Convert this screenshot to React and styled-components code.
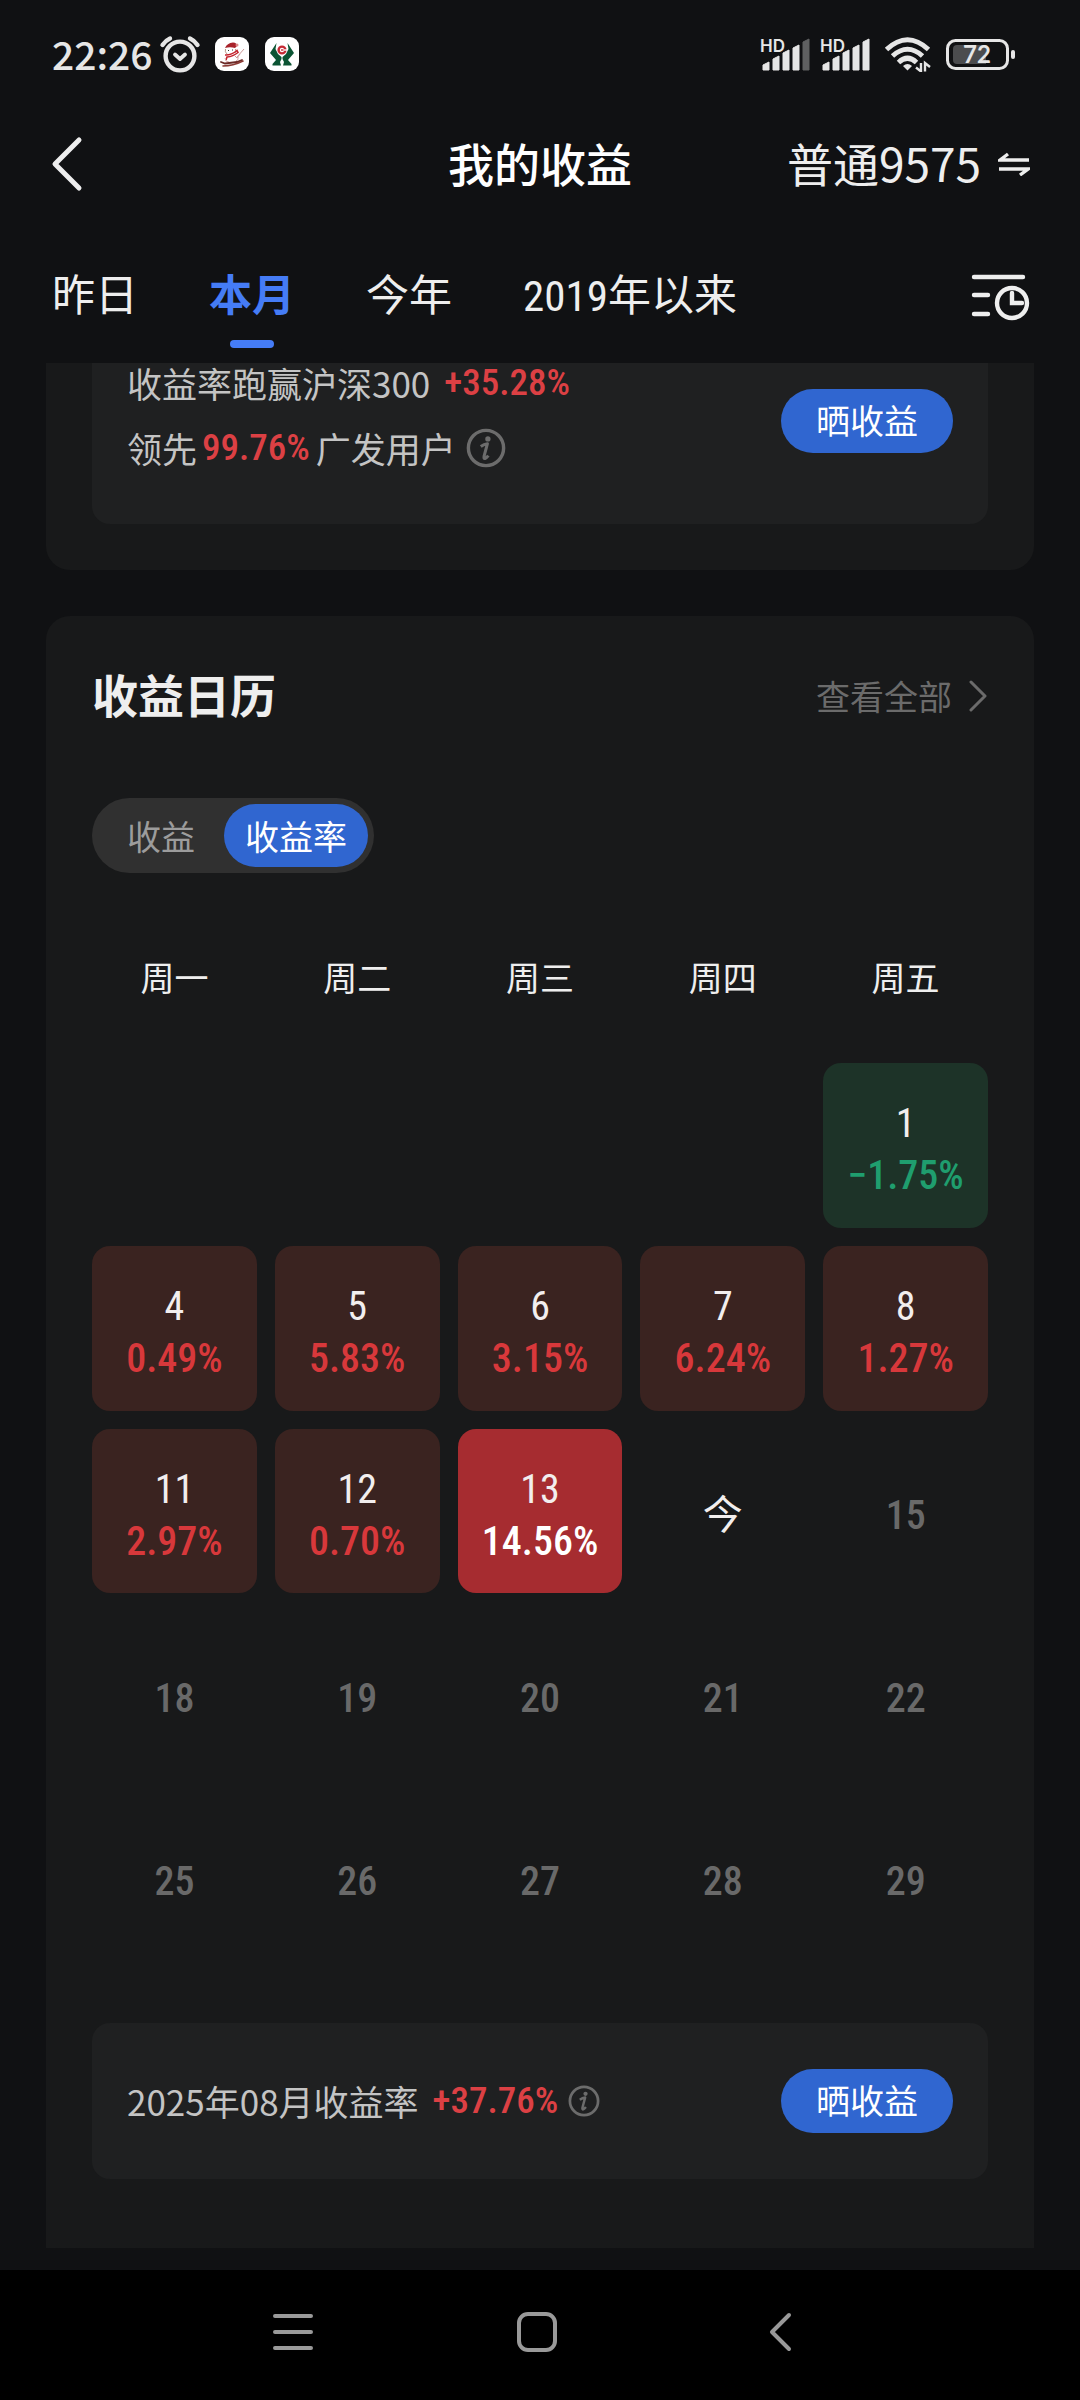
import React, { useState } from 'react';
import styled, { createGlobalStyle } from 'styled-components';

const tabs = ['昨日', '本月', '今年', '2019年以来'];
const modes = ['收益', '收益率'];
const weekdays = ['周一', '周二', '周三', '周四', '周五'];

const weeks = [
  [null, null, null, null, { day: '1', rate: '−1.75%', tone: 'down' }],
  [
    { day: '4', rate: '0.49%', tone: 'up' },
    { day: '5', rate: '5.83%', tone: 'up' },
    { day: '6', rate: '3.15%', tone: 'up' },
    { day: '7', rate: '6.24%', tone: 'up' },
    { day: '8', rate: '1.27%', tone: 'up' },
  ],
  [
    { day: '11', rate: '2.97%', tone: 'up' },
    { day: '12', rate: '0.70%', tone: 'up' },
    { day: '13', rate: '14.56%', tone: 'selected' },
    { day: '今', tone: 'today' },
    { day: '15' },
  ],
  [{ day: '18' }, { day: '19' }, { day: '20' }, { day: '21' }, { day: '22' }],
  [{ day: '25' }, { day: '26' }, { day: '27' }, { day: '28' }, { day: '29' }],
];

const App = () => {
  const [tab, setTab] = useState('本月');
  const [mode, setMode] = useState('收益率');

  return (
    <Page>
      <GlobalStyle />
      <StatusBar>
        <StatusGroup $gap={6}>
          <Time>22:26</Time>
          <AlarmIcon />
          <AppBadges>
            <SkierIcon />
            <HandsIcon />
          </AppBadges>
        </StatusGroup>
        <StatusGroup $gap={12}>
          <Signals>
            <SignalIcon level={4} />
            <SignalIcon level={5} />
          </Signals>
          <WifiIcon />
          <BatteryIcon />
        </StatusGroup>
      </StatusBar>

      <Header>
        <IconButton aria-label="返回">
          <svg width="34" height="58" viewBox="0 0 34 58" fill="none">
            <path
              d="M29 5L5 29l24 24"
              stroke="#eee"
              strokeWidth="5"
              strokeLinecap="round"
              strokeLinejoin="round"
            />
          </svg>
        </IconButton>
        <Title>我的收益</Title>
        <Account>
          <AccountName>普通9575</AccountName>
          <svg width="32" height="24" viewBox="0 0 32 24" fill="none">
            <path
              d="M31 8H2L10 2M1 17h29l-8 6"
              stroke="#eee"
              strokeWidth="3.4"
            />
          </svg>
        </Account>
      </Header>

      <TabBar>
        {tabs.map((name) => (
          <Tab key={name} $active={tab === name} onClick={() => setTab(name)}>
            {name}
          </Tab>
        ))}
        <FilterButton aria-label="筛选时间">
          <svg width="60" height="50" viewBox="0 0 60 50" fill="none">
            <g stroke="#eee" strokeWidth="4.4" strokeLinecap="round">
              <path d="M4 6h49M4 24h14M4 43h14M42 22v10h10" />
              <circle cx="42" cy="32" r="15" />
            </g>
          </svg>
        </FilterButton>
      </TabBar>

      <Content>
        <Card $cut="top">
          <Summary $cut>
            <Compare>
              <Line>
                收益率跑赢沪深300<Gain $gap={14}>+35.28%</Gain>
              </Line>
              <Line>
                领先<Gain $gap={5}>99.76%</Gain>
                <Tail>广发用户</Tail>
                <InfoButton aria-label="说明">
                  <InfoIcon size={40} />
                </InfoButton>
              </Line>
            </Compare>
            <ShareButton>晒收益</ShareButton>
          </Summary>
        </Card>

        <Card $cut="bottom">
          <CardHead>
            <CardTitle>收益日历</CardTitle>
            <MoreLink href="#all">
              查看全部
              <svg width="20" height="32" viewBox="0 0 20 32" fill="none">
                <path
                  d="M3 2l14 14L3 30"
                  stroke="#6b6b6b"
                  strokeWidth="3"
                  strokeLinecap="round"
                  strokeLinejoin="round"
                />
              </svg>
            </MoreLink>
          </CardHead>

          <Toggle>
            {modes.map((name) => (
              <Mode
                key={name}
                $active={mode === name}
                onClick={() => setMode(name)}
              >
                {name}
              </Mode>
            ))}
          </Toggle>

          <Calendar>
            <WeekHead>
              <Week>
                {weekdays.map((name) => (
                  <Weekday key={name}>{name}</Weekday>
                ))}
              </Week>
            </WeekHead>
            <Weeks>
              {weeks.map((week, i) => (
                <Week key={i}>
                  {week.map((item, j) => (
                    <Day key={j} $tone={item?.tone}>
                      {item && <DayNumber $tone={item.tone}>{item.day}</DayNumber>}
                      {item?.rate && <Rate $tone={item.tone}>{item.rate}</Rate>}
                    </Day>
                  ))}
                </Week>
              ))}
            </Weeks>
          </Calendar>

          <Summary>
            <Line>
              2025年08月收益率<Gain $gap={14}>+37.76%</Gain>
              <InfoButton aria-label="说明">
                <InfoIcon size={32} />
              </InfoButton>
            </Line>
            <ShareButton>晒收益</ShareButton>
          </Summary>
        </Card>
      </Content>

      <NavBar>
        <NavButton aria-label="最近任务">
          <svg width="44" height="44" viewBox="0 0 44 44" fill="none">
            <path
              d="M4 6h36M4 22h36M4 38h36"
              stroke="#999"
              strokeWidth="4"
              strokeLinecap="round"
            />
          </svg>
        </NavButton>
        <NavButton aria-label="主屏幕">
          <svg width="44" height="44" viewBox="0 0 44 44" fill="none">
            <rect
              x="4"
              y="4"
              width="36"
              height="36"
              rx="9"
              stroke="#999"
              strokeWidth="4"
            />
          </svg>
        </NavButton>
        <NavButton aria-label="返回上一页">
          <svg width="44" height="44" viewBox="0 0 44 44" fill="none">
            <path
              d="M30 5L13 22l17 17"
              stroke="#999"
              strokeWidth="4"
              strokeLinecap="round"
              strokeLinejoin="round"
            />
          </svg>
        </NavButton>
      </NavBar>
    </Page>
  );
};

export default App;

// icons

const AlarmIcon = () => (
  <svg width="42" height="38" viewBox="0 0 42 38" fill="none">
    <g stroke="#e6e6e6" strokeLinecap="round">
      <circle cx="21" cy="21" r="14.4" strokeWidth="4.4" />
      <path d="M3.5 10Q6.5 5.5 11 3.500M38.5 10Q35.5 5.5 31 3.500" strokeWidth="4.4" />
      <path d="M16 19.5l5 4.5 5-4.5" strokeWidth="3.8" strokeLinejoin="round" />
    </g>
  </svg>
);

const SkierIcon = () => (
  <svg width="34" height="34" viewBox="0 0 34 34" fill="none">
    <rect width="34" height="34" rx="9" fill="#fff" />
    <path d="M10 11q2-5 8-5.500 4 0 4 3.500l-2 2q-5-1.500-10 0z" fill="#a8232b" />
    <circle cx="22" cy="8" r="1.5" fill="#d88" />
    <path d="M10.5 12q-1 3 1.500 5M20.5 12q1 2-.5 4" stroke="#b98" strokeWidth="1" />
    <path d="M13 13.500h1M17 13h1" stroke="#333" strokeWidth="1" />
    <path d="M10 18q6 .5 12-4.500l1 2q-5 4-11 4.500l-1 3" stroke="#c4222c" strokeWidth="1.6" />
    <path d="M19 18l3 3 3-4M29 12L22 20" stroke="#c99" strokeWidth="1" />
    <path d="M10 21q0 4 4 4M23 20q1 3-2 4" stroke="#d9a9a9" strokeWidth="1" />
    <path d="M6 25l4 1.500 12-1.500 5-2" stroke="#6b2a26" strokeWidth="1.8" strokeLinecap="round" />
    <path d="M8 29q10 0 20-5" stroke="#8a3a34" strokeWidth="1.6" strokeLinecap="round" />
  </svg>
);

// two green hands holding a red coin
const HandsIcon = () => (
  <svg width="34" height="34" viewBox="0 0 34 34" fill="none">
    <rect width="34" height="34" rx="9" fill="#fff" />
    <path
      d="M11.5 6L10.500 12 13 17l3.500 3v2l-1.500 3 1 3.500H7.500v-1.500l3.500-4-6-7z"
      fill="#0b5433"
    />
    <path
      d="M22.500 6l1 6L21 17l-3.500 3v2l1.500 3-1 3.500h8.500v-1.500L23 23l6-7z"
      fill="#0b5433"
    />
    <circle cx="17" cy="13" r="3.4" stroke="#c62a34" strokeWidth="2.4" />
    <path d="M18 13h4" stroke="#fff" strokeWidth="1.4" />
    <path d="M16 13h2.5" stroke="#c62a34" strokeWidth="1.4" />
  </svg>
);

const SignalIcon = ({ level }) => (
  <svg width="52" height="34" viewBox="0 0 52 34">
    <HdLabel x="0" y="15">
      HD
    </HdLabel>
    {[8, 14, 20, 25, 31].map((h, i) => (
      <path
        key={h}
        d={`M${3 + i * 10} 33v${3 - h}l6-3v${h}z`}
        fill={i < level ? '#e6e6e6' : '#5f6061'}
        stroke={i < level ? '#e6e6e6' : '#5f6061'}
        strokeLinejoin="round"
      />
    ))}
  </svg>
);

const WifiIcon = () => (
  <svg width="50" height="36" viewBox="0 0 50 36" fill="none">
    <g stroke="#e6e6e6" strokeWidth="5">
      <path d="M2.5 13.5Q23.500-6 44.500 13.500" />
      <path d="M8.5 20Q23.5 6.5 38.5 20" />
      <path d="M14.500 26.5Q23.500 18 32.500 26.5" />
    </g>
    <path d="M23.5 34.500l-4.500-4.500q4.500-4 9 0z" fill="#e6e6e6" />
    <path d="M37 27v8.500l-5-4M41 35.5V27l5 4" stroke="#e6e6e6" strokeWidth="2.4" />
  </svg>
);

const BatteryIcon = () => (
  <svg width="70" height="32" viewBox="0 0 70 32" fill="none">
    <rect x="1.5" y="2.5" width="60" height="28" rx="8" stroke="#e6e6e6" strokeWidth="3" />
    <path d="M11 7h29v19H11q-4 0-4-4V11q0-4 4-4z" fill="#4b4c4e" />
    <rect x="65" y="12" width="4" height="9" rx="2" fill="#e6e6e6" />
    <BatteryLabel x="31" y="25">
      72
    </BatteryLabel>
  </svg>
);

const InfoIcon = ({ size }) => (
  <svg width={size} height={size} viewBox="0 0 42 42" fill="none">
    <circle cx="21" cy="21" r="18.5" stroke="#6c6c6c" strokeWidth="3.6" />
    <circle cx="23" cy="11.5" r="2.8" fill="#6c6c6c" />
    <path
      d="M15.500 19.500q3.500-2.500 7-3l-3.500 13q-.5 3 1 2.500 1.500-.5 3.500-3"
      stroke="#6c6c6c"
      strokeWidth="3.2"
      strokeLinejoin="round"
    />
  </svg>
);

// styled component

const cjk = `'Noto Sans CJK SC', sans-serif`;
const narrow = `'Roboto Condensed', Roboto, 'Noto Sans CJK SC', sans-serif`;

const cellColors = {
  up: '#3a2320',
  down: '#1d3328',
  selected: '#a62c30',
};
const rateColors = {
  up: '#d8383b',
  down: '#1f9e6e',
  selected: '#fff',
};

const GlobalStyle = createGlobalStyle`
  * {
    box-sizing: border-box;
  }
  body {
    margin: 0;
    background-color: #101113;
    color: #eee;
    font-family: ${cjk};
  }
  button {
    padding: 0;
    border: none;
    background-color: transparent;
    color: inherit;
    font-family: inherit;
    cursor: pointer;
  }
  svg {
    display: block;
    flex-shrink: 0;
  }
`;

const Page = styled.div`
  display: flex;
  flex-direction: column;
  min-height: 100vh;
`;

const StatusBar = styled.div`
  display: flex;
  align-items: center;
  justify-content: space-between;
  height: 108px;
  padding: 0 64px 0 52px;
`;
const StatusGroup = styled.div`
  display: flex;
  align-items: center;
  gap: ${(props) => props.$gap}px;
`;
const Time = styled.span`
  padding-bottom: 2px;
  color: #e6e6e6;
  font-size: 39px;
  font-weight: 500;
  line-height: 52px;
`;
const AppBadges = styled.div`
  display: flex;
  gap: 16px;
  padding-left: 8px;
`;
const Signals = styled.div`
  display: flex;
  gap: 8px;
`;
const HdLabel = styled.text`
  fill: #e6e6e6;
  font-family: Inter, sans-serif;
  font-size: 17px;
  font-weight: 600;
`;
const BatteryLabel = styled.text`
  fill: #e6e6e6;
  font-family: Lato, sans-serif;
  font-size: 24px;
  font-weight: 700;
  text-anchor: middle;
`;

const Header = styled.header`
  display: grid;
  grid-template-columns: 1fr auto 1fr;
  align-items: center;
  height: 112px;
  padding: 0 50px;
`;
const IconButton = styled.button`
  justify-self: start;
`;
const Title = styled.h1`
  margin: 0;
  padding-bottom: 4px;
  color: #fff;
  font-size: 46px;
  font-weight: 500;
  line-height: 60px;
`;
const Account = styled.button`
  display: flex;
  align-items: center;
  justify-self: end;
  gap: 17px;
  font-size: 46px;
  line-height: 60px;
`;
const AccountName = styled.span`
  padding-bottom: 4px;
`;

const TabBar = styled.nav`
  display: flex;
  align-items: flex-start;
  gap: 71px;
  padding: 46px 50px 15px 52px;
`;
const Tab = styled.button`
  display: flex;
  flex-direction: column;
  align-items: center;
  gap: 14px;
  color: ${(props) => (props.$active ? '#457cf6' : '#eee')};
  font-family: ${narrow};
  font-size: 43px;
  font-weight: ${(props) => (props.$active ? 700 : 400)};
  line-height: 60px;
  &::after {
    content: '';
    width: 44px;
    height: 8px;
    border-radius: 4px;
    background-color: ${(props) => (props.$active ? '#457cf6' : 'transparent')};
  }
`;
const FilterButton = styled.button`
  display: flex;
  align-items: center;
  height: 60px;
  margin-left: auto;
`;

const Content = styled.main`
  display: flex;
  flex: 1;
  flex-direction: column;
  gap: 46px;
  padding: 0 46px 22px;
`;
const Card = styled.section`
  padding: ${(props) => (props.$cut === 'top' ? '0 46px 46px' : '46px 46px 69px')};
  border-radius: ${(props) =>
    props.$cut === 'top' ? '0 0 24px 24px' : '24px 24px 0 0'};
  background-color: #18191a;
`;
const Summary = styled.div`
  display: flex;
  align-items: center;
  justify-content: space-between;
  padding: ${(props) => (props.$cut ? '0 35px 45px' : '46px 35px')};
  border-radius: ${(props) => (props.$cut ? '0 0 18px 18px' : '18px')};
  background-color: #1f2021;
`;
const Compare = styled.div`
  display: flex;
  flex-direction: column;
  gap: 25px;
  padding-bottom: 11px;
`;
const Line = styled.div`
  display: flex;
  align-items: center;
  color: #c4c4c4;
  font-size: 35px;
  line-height: 40px;
`;
const Gain = styled.strong`
  margin-left: ${(props) => props.$gap}px;
  color: #dc4044;
  font-family: ${narrow};
  font-size: 37px;
  font-weight: 500;
`;
const Tail = styled.span`
  margin-left: 6px;
`;
const InfoButton = styled.button`
  margin-left: 10px;
`;
const ShareButton = styled.button`
  height: 64px;
  padding: 0 35px 2px;
  border-radius: 32px;
  background-color: #3066d0;
  color: #fff;
  font-size: 34px;
  line-height: 52px;
`;

const CardHead = styled.div`
  display: flex;
  align-items: center;
  justify-content: space-between;
`;
const CardTitle = styled.h2`
  margin: 0;
  padding-bottom: 6px;
  font-size: 46px;
  font-weight: 700;
  line-height: 62px;
`;
const MoreLink = styled.a`
  display: flex;
  align-items: center;
  gap: 16px;
  color: #6b6b6b;
  font-size: 34px;
  line-height: 52px;
  text-decoration: none;
`;

const Toggle = styled.div`
  display: flex;
  width: fit-content;
  margin-top: 68px;
  padding: 6px;
  border-radius: 38px;
  background-color: #303030;
`;
const Mode = styled.button`
  height: 63px;
  padding: 0 ${(props) => (props.$active ? 21 : 29)}px;
  border-radius: 32px;
  background-color: ${(props) => (props.$active ? '#3066d0' : 'transparent')};
  color: ${(props) => (props.$active ? '#fff' : '#9c9c9c')};
  font-size: 34px;
  line-height: 52px;
`;

const Calendar = styled.table`
  display: block;
  margin: 78px 0 64px;
`;
const WeekHead = styled.thead`
  display: block;
`;
const Weeks = styled.tbody`
  display: flex;
  flex-direction: column;
  gap: 18px;
  margin-top: 60px;
`;
const Week = styled.tr`
  display: grid;
  grid-template-columns: repeat(5, 1fr);
  gap: 18px;
`;
const Weekday = styled.th`
  padding: 0;
  font-size: 34px;
  font-weight: 400;
  line-height: 52px;
`;
const Day = styled.td`
  display: flex;
  flex-direction: column;
  align-items: center;
  justify-content: center;
  aspect-ratio: 1;
  padding: 10px 0 0;
  border-radius: 18px;
  background-color: ${(props) => cellColors[props.$tone] || 'transparent'};
  font-family: ${narrow};
  font-size: 40px;
  line-height: 52px;
`;
const DayNumber = styled.span`
  color: ${(props) => (props.$tone ? '#f2eeee' : '#696969')};
  font-weight: ${(props) => (props.$tone ? 400 : 500)};
`;
const Rate = styled.span`
  color: ${(props) => rateColors[props.$tone]};
  font-weight: 500;
`;

const NavBar = styled.footer`
  display: flex;
  align-items: center;
  justify-content: center;
  gap: 164px;
  height: 130px;
  padding: 0 6px 6px 0;
  background-color: #000;
`;
const NavButton = styled.button`
  display: flex;
  justify-content: center;
  width: 80px;
`;
